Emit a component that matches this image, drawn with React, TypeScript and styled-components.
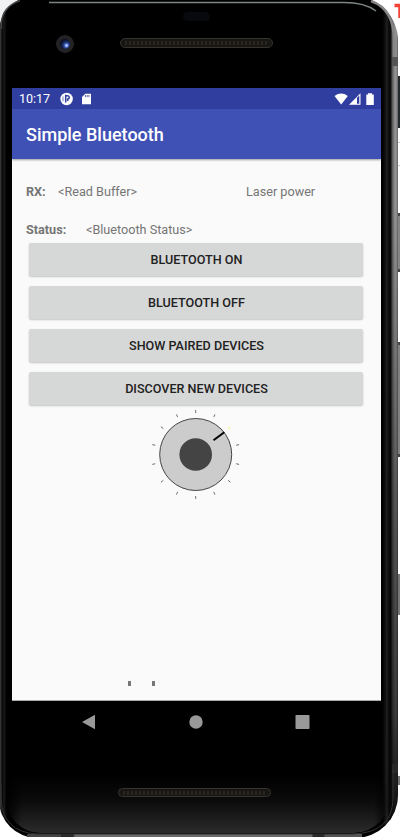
import React from "react";
import styled, { createGlobalStyle } from "styled-components";

const GlobalStyle = createGlobalStyle`
  * { box-sizing: border-box; }
  body { margin: 0; background: #fff; font-family: Roboto, "Liberation Sans", sans-serif; }
`;

const Stage = styled.main`
  position: relative;
  width: 400px;
  height: 837px;
  overflow: hidden;
`;

const Corner = styled.div`
  position: absolute;
  left: 0;
  top: 0;
  width: 40px;
  height: 40px;
  background: #eff1f2;
`;

const Fragment = styled.div<{ $top: number; $height: number; $left?: number; $color: string; $cap?: string }>`
  position: absolute;
  right: 0;
  left: ${(p) => p.$left ?? 397}px;
  top: ${(p) => p.$top}px;
  height: ${(p) => p.$height}px;
  background: ${(p) => p.$color};
  border: 0 solid ${(p) => p.$cap ?? "transparent"};
  border-width: ${(p) => (p.$cap ? "3px 0" : "0")};
`;

const Chassis = styled.div`
  position: absolute;
  left: -1px;
  top: -4px;
  width: 399px;
  height: 842px;
  border-radius: 36px 45px 43px 38px;
  overflow: hidden;
  background:
    linear-gradient(90deg, #333 0 2px, #060606 3px, #191919 5px, #060606 7px, #000 8px, transparent 9px),
    linear-gradient(90deg, transparent 383px, #080808 385px, #202020 388px, #080808 390px, #111 392px, #555 393px, #666 394px, #959595 396px, #858585 398px, #555 399px),
    #000;
`;

const EdgeShade = styled.div`
  position: absolute;
  right: 0;
  top: 220px;
  width: 8px;
  bottom: 0;
  background: linear-gradient(180deg, transparent, rgba(0, 0, 0, 0.4) 45%, rgba(0, 0, 0, 0.6) 80%, #080808);
`;

const Chin = styled.div`
  position: absolute;
  left: 7px;
  right: 8px;
  bottom: 5px;
  height: 58px;
  border-radius: 0 0 36px 34px;
  background: linear-gradient(180deg, transparent, #0b0b0b 45%, #2b2b2b);
  mask-image: linear-gradient(90deg, transparent, #000 16px, #000 calc(100% - 16px), transparent);
`;

const ChinRim = styled.div`
  position: absolute;
  left: 28px;
  right: 36px;
  bottom: 1px;
  height: 3px;
  background: linear-gradient(90deg, #444 0 34px, #292929 34px 46px, #6b6969 48px 285px, #292929 286px 297px, #555 298px);
`;

const RimDrawing = styled.svg`
  position: absolute;
  inset: 0;
`;

const Antenna = styled.div<{ $top: number; $color: string }>`
  position: absolute;
  right: 0;
  top: ${(p) => p.$top}px;
  width: 6px;
  height: 9px;
  background: ${(p) => p.$color};
`;

const Device = styled.div`
  position: relative;
  display: grid;
  grid-template-rows: 88px 613px 136px;
  width: 369px;
  height: 837px;
  margin-left: 12px;
`;

const Bezel = styled.header`
  display: grid;
  grid-template-columns: 108px 154px 1fr;
  grid-template-rows: 36px 1fr;
`;

const Sensor = styled.div`
  grid-column: 2;
  width: 27px;
  height: 9px;
  margin: 12px 0 0 63px;
  border-radius: 5px;
  background: #08090e;
`;

const Camera = styled.div`
  grid-row: 2;
  width: 18px;
  height: 18px;
  margin: -1px 0 0 44px;
  border-radius: 50%;
  border: 4px solid #232224;
  background: radial-gradient(circle at 65% 65%, #a9c3ff 0 10%, #3d5cb7 22%, #172759 42%, #080d22 72%);
`;

const Speaker = styled.div`
  width: 153px;
  height: 10px;
  padding: 2px 4px;
  border: 1px solid #36332e;
  border-radius: 5px;
  background: #171614;
  &::before {
    content: "";
    display: block;
    height: 4px;
    background: repeating-linear-gradient(90deg, #29251f 0 2px, #191714 2px 4px);
  }
`;

const TopSpeaker = styled(Speaker)`
  grid-row: 2;
  grid-column: 2;
  margin-top: 2px;
`;

const Screen = styled.section`
  display: flex;
  flex-direction: column;
  background: #fafafa;
  border-bottom: 1px solid #aaa;
`;

const StatusBar = styled.div`
  display: flex;
  align-items: center;
  flex: 0 0 21px;
  padding-left: 7px;
  color: #fff;
  background: #303f9f;
`;

const Clock = styled.time`
  width: 41px;
  font-size: 12.5px;
  line-height: 21px;
`;

const StatusIcons = styled.svg`
  display: block;
  flex: none;
`;

const Signals = styled(StatusIcons)`
  margin-left: auto;
  margin-right: 6px;
`;

const AppBar = styled.header`
  display: flex;
  align-items: center;
  flex: 0 0 50px;
  padding-left: 14px;
  background: #3f51b5;
  box-shadow: 0 1px 2px rgba(0, 0, 0, 0.38);
`;

const Title = styled.h1`
  margin: 2px 0 0;
  color: #fff;
  font-size: 18px;
  font-weight: 500;
  line-height: 22px;
`;

const Content = styled.div`
  display: flex;
  flex-direction: column;
  flex: 1;
  padding: 24px 14px 0;
`;

const ReadoutRow = styled.div<{ $label: number }>`
  display: grid;
  grid-template-columns: ${(p) => p.$label}px ${(p) => 220 - p.$label}px 1fr;
  height: 18px;
  color: #757575;
  font-size: 12.65px;
  line-height: 18px;
  white-space: nowrap;
  & + & { margin-top: 20px; }
`;

const Label = styled.strong`
  font-weight: 700;
`;

const ButtonStack = styled.div`
  display: grid;
  grid-auto-rows: 33px;
  gap: 10px;
  margin: 4px 4px 0 3px;
`;

const ActionButton = styled.button`
  border: 0;
  border-radius: 2px;
  padding: 0 0 0 1px;
  color: #212121;
  background: #d6d7d7;
  box-shadow: 0 1px 2px rgba(0, 0, 0, 0.22);
  font: 500 12.6px/33px Roboto, sans-serif;
  text-transform: uppercase;
`;

const Knob = styled.svg`
  display: block;
  margin: 0 0 0 120px;
`;

const ClippedValue = styled.div`
  display: flex;
  gap: 21px;
  margin: auto 0 14px 102px;
`;

const ValueMark = styled.span`
  width: 3px;
  height: 5px;
  background: #777;
`;

const Footer = styled.footer`
  display: flex;
  flex-direction: column;
`;

const Navigation = styled.nav`
  display: grid;
  grid-template-columns: 108px 105px 1fr;
  height: 42px;
  padding-left: 69px;
  align-items: center;
`;

const BottomSpeaker = styled(Speaker)`
  height: 9px;
  margin: 45px 0 0 106px;
`;

const ticks = Array.from({ length: 14 }, (_, index) => index * (360 / 14));

function PowerKnob() {
  return (
    <Knob width="100" height="100" viewBox="146 405 100 100" aria-label="Laser power dial">
      {ticks.map((angle, index) => (
        <line key={angle} x1="195.7" y1="410" x2="195.7" y2="413" stroke={index === 2 ? "#f7ef70" : "#666"} strokeWidth=".9" transform={`rotate(${angle} 195.7 454.5)`} />
      ))}
      <circle cx="195.7" cy="454.5" r="36" fill="#ccc" stroke="#444" strokeWidth="1" />
      <circle cx="195.7" cy="454.5" r="16.3" fill="#444" />
      <path d="M213.5 440.3 224.3 432.2" stroke="#000" strokeWidth="2" />
    </Knob>
  );
}

const actions = ["Bluetooth on", "Bluetooth off", "Show paired devices", "Discover new devices"];

export default function App() {
  return (
    <>
      <GlobalStyle />
      <Stage>
        <Corner />
        <Fragment $top={76} $height={52} $color="#252a2d" />
        <Fragment $top={142} $height={1} $color="#ccc" />
        <Fragment $top={165} $height={1} $color="#ccc" />
        <Fragment $top={213} $height={59} $color="#858585" $cap="#444" />
        <Fragment $top={342} $height={115} $color="#818181" $cap="#444" />
        <Fragment $top={574} $height={41} $color="#777" />
        <Fragment $top={776} $height={9} $color="#777" />
        <Chassis>
          <EdgeShade />
          <Chin />
          <ChinRim />
          <Antenna $top={61} $color="#555" />
          <Antenna $top={768} $color="#282828" />
        </Chassis>
        <RimDrawing width="400" height="837" viewBox="0 0 400 837" fill="none">
          <path d="M49 2.5H344Q365 2.5 376 11" stroke="#7d8585" strokeWidth="1.4" />
          <path d="M1.5 29V23Q2 7 20 .5" stroke="#444" strokeWidth="1.4" />
          <path d="M371 1Q394 9 394 40V57" stroke="#858585" strokeWidth="2.5" />
          <path d="M1 785V798Q2 832 37 834H352Q393 833 393 798V770" stroke="#333" />
          <path d="M394.5 5.5H404M400 5.5V18" stroke="#f44336" strokeWidth="3.5" />
        </RimDrawing>
        <Device>
          <Bezel><Sensor /><Camera /><TopSpeaker /></Bezel>
          <Screen>
            <StatusBar>
              <Clock>10:17</Clock>
              <StatusIcons width="34" height="16" viewBox="0 0 34 16">
                <circle cx="6.6" cy="8" r="6.2" fill="#fff" />
                <path d="M5.7 3.8V11.6M5.7 4.8H7.6Q9.3 5 9.3 6.5T7.7 8.1V10" fill="none" stroke="#303f9f" strokeWidth="1.5" />
                <path d="M3 5.5V10.2" stroke="#303f9f" strokeWidth=".7" />
                <path d="M25.3 2.8H31V13.2H22V6Z" fill="#fff" />
                <path d="M25.4 4V6.2M27.2 4V6.2M29 4V6.2" stroke="#303f9f" strokeWidth=".8" />
              </StatusIcons>
              <Signals width="41" height="16" viewBox="334 90 41 16">
                <path d="M334.5 95Q341.2 90.2 347.8 95L341.2 103.6Z" fill="#fff" />
                <path d="M349 103.8 360.5 92.3V103.8ZM357 96.8V102.8H359.3V94.6Z" fill="#fff" fillRule="evenodd" />
                <path d="M368 92.2H372V93.5H373.8V104H366.3V93.5H368Z" fill="#fff" />
              </Signals>
            </StatusBar>
            <AppBar><Title>Simple Bluetooth</Title></AppBar>
            <Content>
              <ReadoutRow $label={32}><Label>RX:</Label><span>&lt;Read Buffer&gt;</span><span>Laser power</span></ReadoutRow>
              <ReadoutRow $label={60}><Label>Status:</Label><span>&lt;Bluetooth Status&gt;</span></ReadoutRow>
              <ButtonStack>{actions.map((action) => <ActionButton key={action}>{action}</ActionButton>)}</ButtonStack>
              <PowerKnob />
              <ClippedValue><ValueMark /><ValueMark /></ClippedValue>
            </Content>
          </Screen>
          <Footer>
            <Navigation>
              <svg width="15" height="16" viewBox="0 0 15 16" fill="#999"><path d="M1 8 14 .8V15.2Z" /></svg>
              <svg width="14" height="14" viewBox="0 0 14 14" fill="#999"><circle cx="7" cy="7" r="6.7" /></svg>
              <svg width="16" height="14" viewBox="0 0 16 14" fill="#999"><rect x="1.5" width="14" height="14" rx=".7" /></svg>
            </Navigation>
            <BottomSpeaker />
          </Footer>
        </Device>
      </Stage>
    </>
  );
}
